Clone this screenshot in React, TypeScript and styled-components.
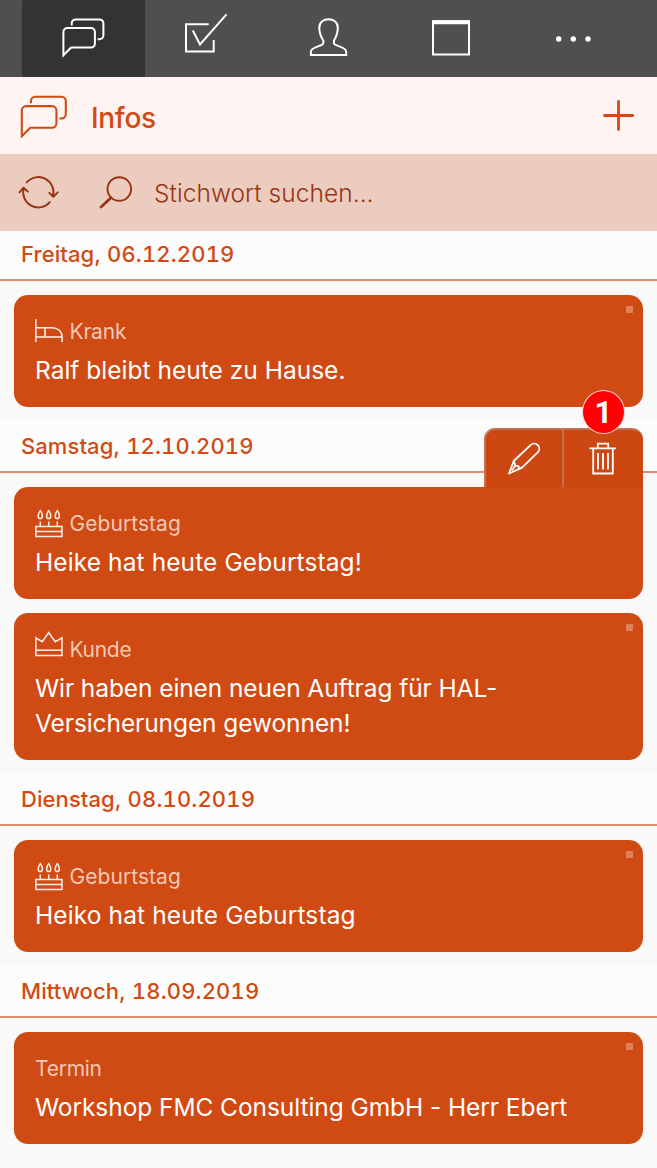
import React from 'react';
import styled, { createGlobalStyle } from 'styled-components';

const ACCENT = '#d04a14';

const GlobalStyle = createGlobalStyle`
  * { box-sizing: border-box; }
  body {
    margin: 0;
    background: #f9f9f9;
    font-family: Inter, "Liberation Sans", sans-serif;
    overflow: hidden;
  }
`;

const Screen = styled.div`
  width: 657px;
  height: 1168px;
  overflow: hidden;
  background: #f9f9f9;
`;

const Nav = styled.nav`
  display: flex;
  height: 77px;
  padding: 0 20px 0 22px;
  background: #4f4f4f;
`;

const Tab = styled.button<{ $active?: boolean }>`
  flex: 1;
  height: 77px;
  padding: 0;
  border: 0;
  border-radius: 2px;
  background: ${(p) => (p.$active ? '#333' : 'transparent')};
  color: #fff;
`;

const Icon = styled.svg`
  display: block;
  flex: none;
  fill: none;
  stroke: currentColor;
  overflow: visible;
`;

const NavIcon = styled(Icon)`
  stroke-width: 2;
`;

const Header = styled.header`
  display: flex;
  align-items: center;
  height: 77px;
  padding: 0 14px;
  background: #fff4f1;
  color: ${ACCENT};
`;

const Title = styled.h1`
  flex: 1;
  margin: 5px 0 0 21px;
  font-size: 28px;
  font-weight: 460;
  line-height: 36px;
  letter-spacing: -0.3px;
`;

const SearchBar = styled.div`
  display: flex;
  align-items: center;
  height: 77px;
  padding: 0 14px;
  background: #ebccbf;
  color: #983411;
`;

const SearchText = styled.span`
  margin: 0 0 0 14px;
  font-size: 24.5px;
  font-weight: 300;
  letter-spacing: 0.05px;
`;

const DayHeading = styled.h2<{ $first?: boolean }>`
  display: flex;
  gap: 6px;
  height: ${(p) => (p.$first ? 50 : 52)}px;
  margin: 0;
  padding: ${(p) => (p.$first ? 8 : 10)}px 21px 0;
  border-bottom: 2px solid #dd8d6c;
  background: #fcfcfc;
  color: ${ACCENT};
  font-size: 22px;
  font-weight: 500;
  line-height: 30px;
`;

const Weekday = styled.span`
  letter-spacing: 0.08px;
`;

const DayDate = styled.time`
  font-variant-numeric: tabular-nums;
  letter-spacing: 0.17px;
`;

const Day = styled.section`
  position: relative;
`;

const CardList = styled.div`
  display: flex;
  flex-direction: column;
  gap: 14px;
  padding: 14px;
`;

const Card = styled.article<{ $open?: boolean }>`
  position: relative;
  padding: 21px 21px 19px;
  border-radius: 14px;
  border-top-right-radius: ${(p) => (p.$open ? 0 : 14)}px;
  background: ${ACCENT};
  color: #fff;
`;

const Marker = styled.span`
  position: absolute;
  top: 11px;
  right: 10px;
  width: 7px;
  height: 7px;
  background: #de815a;
`;

const Category = styled.div<{ $tracking: number }>`
  display: flex;
  gap: 6.5px;
  height: 35px;
  color: #f2c7b5;
  font-size: 21px;
  line-height: 32px;
  letter-spacing: ${(p) => p.$tracking}px;
`;

const CategoryIcon = styled(Icon)`
  color: #fff0ea;
  stroke-width: 1.5;
`;

const Message = styled.p<{ $tracking: number }>`
  margin: 2px 0 0;
  font-size: 24.5px;
  line-height: 35px;
  letter-spacing: ${(p) => p.$tracking}px;
`;

const Actions = styled.div`
  position: absolute;
  top: 7px;
  right: 14px;
  display: flex;
  width: 159px;
  height: 59px;
  border: 2px solid #c27353;
  border-right-width: 0;
  border-bottom: 0;
  border-radius: 11px 11px 0 0;
  background: #cc4712;
`;

const Action = styled.button`
  flex: none;
  width: 76px;
  padding: 0;
  border: 0;
  background: transparent;
  color: #fff;

  & + & {
    width: 81px;
    border-left: 2px solid #c27353;
  }
`;

const Badge = styled.span`
  position: absolute;
  top: -40px;
  right: 18px;
  display: flex;
  align-items: center;
  justify-content: center;
  width: 43px;
  height: 44px;
  border: 1px solid #ffd9d4;
  border-radius: 50%;
  background: #fe0005;
  color: #fff;
  font: 700 31px Roboto, "Open Sans", sans-serif;
`;

const Bubbles = ({ height, width, box, weight = 1.9 }: { height: number; width: number; box: string; weight?: number }) => (
  <Icon width={width} height={height} viewBox={box} strokeWidth={weight}>
    <path d="M68 28.4H91.3a4 4 0 0 1 4 4V44a4 4 0 0 1-4 4H71.5L63.8 55.7V32.4a4 4 0 0 1 4-4Z" />
    <path d="M72.1 25.8V23.8a4 4 0 0 1 4-4H99.8a4 4 0 0 1 4 4V35.6a4 4 0 0 1-4 4H98" />
  </Icon>
);

type Kind = 'bed' | 'cake' | 'crown';

const KindIcon = ({ kind }: { kind: Kind }) => (
  <CategoryIcon width={28} height={32} viewBox="0 0 28 32">
    {kind === 'bed' && (
      <path d="M.9 3.3V26M.9 11.8H17c6 0 10.1 3.5 10.1 9V26M.9 21H27M10 11.8V21" />
    )}
    {kind === 'cake' && (
      <path d="M.9 18.500H27V28.500H.9ZM.9 23.500H27M5.300 18V13.500M13.700 18V13.500M22.300 18V13.500M5.300 2.600c3 3.700 2.600 8 0 8s-3-4.300 0-8ZM13.700 2.600c3 3.700 2.600 8 0 8s-3-4.300 0-8ZM22.300 2.600c3 3.700 2.600 8 0 8s-3-4.300 0-8Z" />
    )}
    {kind === 'crown' && (
      <path d="M.9 21.400V3.800L7.200 7.700 13.700-1.500 20.300 7.700 27 3.800V21.400ZM.9 16.200H27" />
    )}
  </CategoryIcon>
);

interface Entry {
  kind?: Kind;
  category: string;
  text: string;
  open?: boolean;
  labelTracking: number;
  textTracking: number;
}

const days: { weekday: string; date: string; entries: Entry[] }[] = [
  {
    weekday: 'Freitag,',
    date: '06.12.2019',
    entries: [
      { kind: 'bed', category: 'Krank', text: 'Ralf bleibt heute zu Hause.', labelTracking: -0.2, textTracking: 0.01 },
    ],
  },
  {
    weekday: 'Samstag,',
    date: '12.10.2019',
    entries: [
      { kind: 'cake', category: 'Geburtstag', text: 'Heike hat heute Geburtstag!', open: true, labelTracking: 0.05, textTracking: 0.1 },
      { kind: 'crown', category: 'Kunde', text: 'Wir haben einen neuen Auftrag für HAL-Versicherungen gewonnen!', labelTracking: -0.3, textTracking: -0.09 },
    ],
  },
  {
    weekday: 'Dienstag,',
    date: '08.10.2019',
    entries: [
      { kind: 'cake', category: 'Geburtstag', text: 'Heiko hat heute Geburtstag', labelTracking: 0.05, textTracking: 0.12 },
    ],
  },
  {
    weekday: 'Mittwoch,',
    date: '18.09.2019',
    entries: [
      { category: 'Termin', text: 'Workshop FMC Consulting GmbH - Herr Ebert', labelTracking: -0.25, textTracking: -0.07 },
    ],
  },
];

const EntryActions = () => (
  <Actions>
    <Action aria-label="Bearbeiten">
      <Icon width={76} height={57} viewBox="486 430 76 57" strokeWidth={1.8} strokeLinejoin="round">
        <path d="M509 473.500 513.700 461 530.800 444.900a5.100 5.100 0 0 1 7.200 7.200L522 467.600ZM513.700 461l1.700 4.600 2.700.2.900 2.200 3 .1M515.400 465.600l-3.400 4.600" />
      </Icon>
    </Action>
    <Action aria-label="Löschen">
      <Icon width={79} height={57} viewBox="564 430 79 57" strokeWidth={1.8}>
        <path d="M589.500 448.300H616M593.200 448.300V473.500H612.800V448.300M597.800 448V443.600H608.200V448M598 453V469.500M603 453V469.500M608 453V469.500" />
      </Icon>
    </Action>
    <Badge>1</Badge>
  </Actions>
);

export default function App() {
  return (
    <Screen>
      <GlobalStyle />
      <Nav>
        <Tab $active>
          <Bubbles width={123} height={77} box="22.4 0.4 123 77" weight={2} />
        </Tab>
        <Tab>
          <NavIcon width={123} height={77} viewBox="145 0 123 77">
            <path d="M208.700 24.300H186V51.500H213.700V40M192.800 30.500 200 44.500 226.500 14.300" />
          </NavIcon>
        </Tab>
        <Tab>
          <NavIcon width={123} height={77} viewBox="268 0 123 77">
            <path d="M310.900 55H346.200V51.500C346.200 47 334 45.800 334 43.500V40.500C336.500 36.500 337.800 32 337.800 27.500C337.800 16.500 319.300 16.500 319.300 27.500C319.300 32 320.600 36.500 323.300 40.500V43.500C323.300 45.800 310.900 47 310.900 51.500Z" />
          </NavIcon>
        </Tab>
        <Tab>
          <NavIcon width={123} height={77} viewBox="391 0 123 77">
            <path d="M433 21.300H469V54.500H433Z" />
            <path d="M433 22.300H469" strokeWidth={4} />
          </NavIcon>
        </Tab>
        <Tab>
          <NavIcon width={123} height={77} viewBox="514 0 123 77">
            <g fill="currentColor" stroke="none">
              <circle cx="558.700" cy="39" r="2.700" />
              <circle cx="573.300" cy="39" r="2.700" />
              <circle cx="588" cy="39" r="2.700" />
            </g>
          </NavIcon>
        </Tab>
      </Nav>
      <Header>
        <Bubbles width={56} height={56} box="56.700 11.900 50.910 50.910" />
        <Title>Infos</Title>
        <Icon width={49} height={77} viewBox="594 77 49 77" strokeWidth={2.8} strokeLinecap="round">
          <path d="M604.500 115.500H632.700M618.500 101.500V129.500" />
        </Icon>
      </Header>
      <SearchBar>
        <Icon width={49} height={77} viewBox="14 154 49 77" strokeWidth={1.9} strokeLinecap="round" strokeLinejoin="round">
          <path d="M26.700 182.450A15.200 15.200 0 0 1 52.900 196.500M49.850 202.150A15.200 15.200 0 0 1 23.700 188.100M19.500 192.300 23.500 187.700 27.800 191.500M49.300 192.800 53.300 196.800 57.700 192.300" />
        </Icon>
        <Icon width={77} height={77} viewBox="63 154 77 77" strokeWidth={1.9} strokeLinecap="round">
          <circle cx="119.300" cy="189" r="11.800" />
          <path d="M101 207 111 197.800" strokeWidth={2.700} />
        </Icon>
        <SearchText>Stichwort suchen...</SearchText>
      </SearchBar>
      <main>
        {days.map((day, i) => (
          <Day key={day.date}>
            <DayHeading $first={i === 0}>
              <Weekday>{day.weekday}</Weekday>
              <DayDate>{day.date}</DayDate>
            </DayHeading>
            <CardList>
              {day.entries.map((entry) => (
                <Card key={entry.text} $open={entry.open}>
                  {!entry.open && <Marker />}
                  <Category $tracking={entry.labelTracking}>
                    {entry.kind && <KindIcon kind={entry.kind} />}
                    {entry.category}
                  </Category>
                  <Message $tracking={entry.textTracking}>{entry.text}</Message>
                </Card>
              ))}
            </CardList>
            {day.entries.some((entry) => entry.open) && <EntryActions />}
          </Day>
        ))}
      </main>
    </Screen>
  );
}
